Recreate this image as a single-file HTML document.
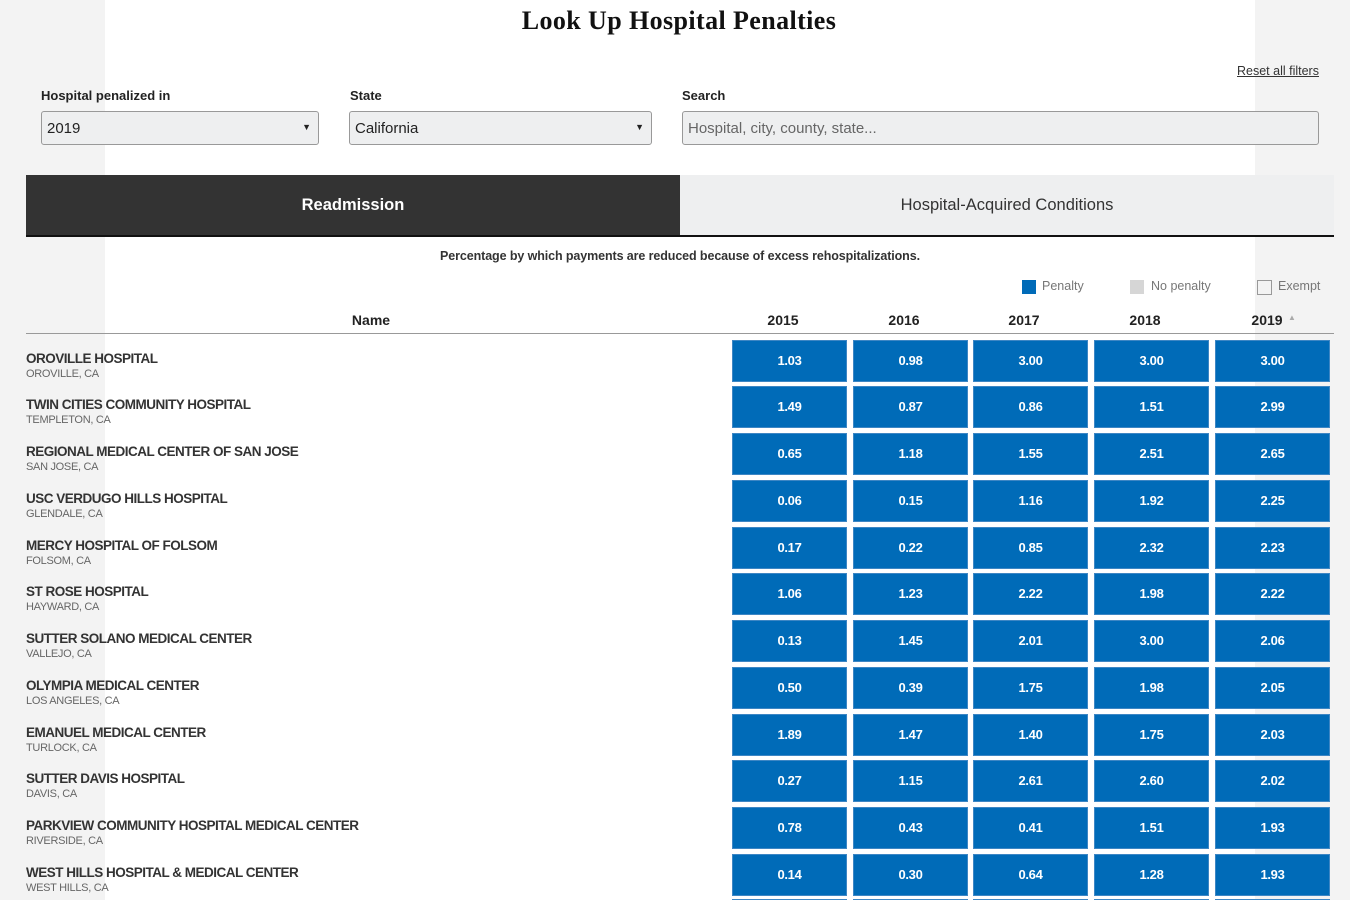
<!DOCTYPE html>
<html style="height:900px;overflow:hidden"><head><meta charset="utf-8">
<style>
*{margin:0;padding:0;box-sizing:border-box}
body{width:1350px;height:900px;overflow:hidden;background:#f3f3f3;font-family:"Liberation Sans",sans-serif;color:#333;position:relative}
.col{position:absolute;left:105px;top:0;width:1150px;height:900px;background:#fff}
.a{position:absolute}
h1{position:absolute;left:0;width:1350px;top:6px;text-align:center;font-family:"Liberation Serif",serif;font-size:26px;font-weight:bold;color:#111;padding-left:8px;letter-spacing:0.4px}
.lbl{font-size:13px;font-weight:bold;color:#222;top:88px}
.sel{top:111px;height:34px;border:1px solid #999;border-radius:3px;background:#eeeff0;font-size:15px;padding:8px 5px;color:#222}
.sel span{position:absolute;right:7px;top:10px;font-size:9px}
.tab{top:175px;height:60px;font-size:16.5px;font-weight:bold;text-align:center;line-height:60px}
.nm{left:26px;font-size:13.5px;font-weight:bold;color:#333;letter-spacing:-0.5px}
.ct{left:26px;font-size:11px;color:#666;letter-spacing:-0.3px}
.c{position:absolute;height:42px;background:#006bb8;border:1px solid #3d86c4;color:#fff;font-size:13px;font-weight:bold;text-align:center;line-height:40px;letter-spacing:-0.3px}
.yr{top:312px;font-size:14px;font-weight:bold;color:#222;width:80px;text-align:center}
</style></head><body>
<div class="col"></div>
<h1>Look Up Hospital Penalties</h1>
<div class="a" style="left:1237px;top:64px;font-size:12.5px;text-decoration:underline;color:#333">Reset all filters</div>
<div class="a lbl" style="left:41px">Hospital penalized in</div>
<div class="a lbl" style="left:350px">State</div>
<div class="a lbl" style="left:682px">Search</div>
<div class="a sel" style="left:41px;width:278px">2019<span>▼</span></div>
<div class="a sel" style="left:349px;width:303px">California<span>▼</span></div>
<div class="a sel" style="left:682px;width:637px;color:#666">Hospital, city, county, state...</div>
<div class="a tab" style="left:26px;width:654px;background:#333;color:#fff">Readmission</div>
<div class="a tab" style="left:680px;width:654px;background:#eeeff0;color:#333;font-weight:normal">Hospital-Acquired Conditions</div>
<div class="a" style="left:26px;top:235px;width:1308px;height:2px;background:#111"></div>
<div class="a" style="left:0;width:1360px;top:249px;text-align:center;font-size:12.5px;font-weight:bold;color:#333;letter-spacing:-0.1px">Percentage by which payments are reduced because of excess rehospitalizations.</div>
<div class="a" style="left:1022px;top:280px;width:14px;height:14px;background:#006bb8"></div>
<div class="a" style="left:1042px;top:279px;font-size:12.5px;color:#777">Penalty</div>
<div class="a" style="left:1130px;top:280px;width:14px;height:14px;background:#d6d6d6"></div>
<div class="a" style="left:1151px;top:279px;font-size:12.5px;color:#777">No penalty</div>
<div class="a" style="left:1257px;top:280px;width:15px;height:15px;border:1px solid #999"></div>
<div class="a" style="left:1278px;top:279px;font-size:12.5px;color:#777">Exempt</div>
<div class="a yr" style="left:331px">Name</div>
<div class="a yr" style="left:743px">2015</div>
<div class="a yr" style="left:864px">2016</div>
<div class="a yr" style="left:984px">2017</div>
<div class="a yr" style="left:1105px">2018</div>
<div class="a yr" style="left:1227px">2019</div>
<div class="a" style="left:1288px;top:313px;font-size:8px;color:#aaa">▲</div>
<div class="a" style="left:26px;top:333px;width:1308px;height:1px;background:#999"></div>
<div id="rows"></div>
<script>
var d=[["OROVILLE HOSPITAL","OROVILLE, CA","1.03 0.98 3.00 3.00 3.00"],
["TWIN CITIES COMMUNITY HOSPITAL","TEMPLETON, CA","1.49 0.87 0.86 1.51 2.99"],
["REGIONAL MEDICAL CENTER OF SAN JOSE","SAN JOSE, CA","0.65 1.18 1.55 2.51 2.65"],
["USC VERDUGO HILLS HOSPITAL","GLENDALE, CA","0.06 0.15 1.16 1.92 2.25"],
["MERCY HOSPITAL OF FOLSOM","FOLSOM, CA","0.17 0.22 0.85 2.32 2.23"],
["ST ROSE HOSPITAL","HAYWARD, CA","1.06 1.23 2.22 1.98 2.22"],
["SUTTER SOLANO MEDICAL CENTER","VALLEJO, CA","0.13 1.45 2.01 3.00 2.06"],
["OLYMPIA MEDICAL CENTER","LOS ANGELES, CA","0.50 0.39 1.75 1.98 2.05"],
["EMANUEL MEDICAL CENTER","TURLOCK, CA","1.89 1.47 1.40 1.75 2.03"],
["SUTTER DAVIS HOSPITAL","DAVIS, CA","0.27 1.15 2.61 2.60 2.02"],
["PARKVIEW COMMUNITY HOSPITAL MEDICAL CENTER","RIVERSIDE, CA","0.78 0.43 0.41 1.51 1.93"],
["WEST HILLS HOSPITAL & MEDICAL CENTER","WEST HILLS, CA","0.14 0.30 0.64 1.28 1.93"]];
var xs=[732,853,973,1094,1215],h="";
d.forEach(function(r,i){var y=339.5+46.75*i;
h+='<div class="a nm" style="top:'+(y+11)+'px">'+r[0].replace("&","&amp;")+'</div><div class="a ct" style="top:'+(y+28)+'px">'+r[1]+'</div>';
r[2].split(" ").forEach(function(v,j){h+='<div class="c" style="left:'+xs[j]+'px;top:'+y+'px;width:115px">'+v+'</div>';});});
xs.forEach(function(x){h+='<div class="c" style="left:'+x+'px;top:899px;width:115px;height:1px"></div>';});
document.getElementById("rows").innerHTML=h;
</script>
</body></html>
